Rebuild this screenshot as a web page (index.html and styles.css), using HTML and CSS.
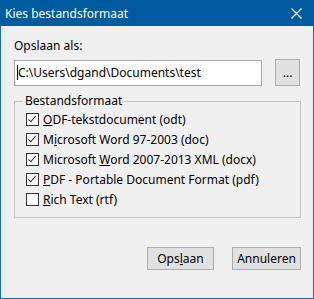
FILE: index.html
```html
<!DOCTYPE html>
<html lang="nl">
<head>
  <meta charset="UTF-8">
  <title>Kies bestandsformaat</title>
  <link rel="stylesheet" href="styles.css">
</head>
<body>

<div class="window">
  <div class="titlebar">
    <span class="title">Kies bestandsformaat</span>
    <svg class="close" width="11" height="11" viewBox="0 0 11 11">
      <path d="M0.5 0.5 L10.5 10.5 M10.5 0.5 L0.5 10.5" stroke="#fff" stroke-width="1.2"/>
    </svg>
  </div>

  <div class="content">
    <div class="label">Opslaan als:</div>
    <div class="path-row">
      <div class="path-input"><span class="caret"></span>C:\Users\dgand\Documents\test</div>
      <button class="btn browse">...</button>
    </div>

    <fieldset class="group">
      <legend>Bestandsformaat</legend>
      <div class="check-row"><span class="box checked"></span><span><u>O</u>DF-tekstdocument (odt)</span></div>
      <div class="check-row"><span class="box checked"></span><span>M<u>i</u>crosoft Word 97-2003 (doc)</span></div>
      <div class="check-row"><span class="box checked"></span><span>Microsoft <u>W</u>ord 2007-2013 XML (docx)</span></div>
      <div class="check-row"><span class="box checked"></span><span><u>P</u>DF - Portable Document Format (pdf)</span></div>
      <div class="check-row"><span class="box"></span><span><u>R</u>ich Text (rtf)</span></div>
    </fieldset>

    <div class="actions">
      <button class="btn action">Ops<u>l</u>aan</button>
      <button class="btn action">Annuleren</button>
    </div>
  </div>
</div>

</body>
</html>
```

FILE: styles.css
```css
body {
  margin: 0;
  font-family: 'Segoe UI', 'Noto Sans', 'Open Sans', sans-serif;
  font-size: 12px;
  color: #000;
}
.window {
  width: 314px;
  height: 299px;
  box-sizing: border-box;
  border: 1px solid #1a6bb5;
  border-top: none;
  background-color: #f0f0f0;
  display: flex;
  flex-direction: column;
}
.titlebar {
  height: 26px;
  margin: 0 -1px;
  background-color: #005a9e;
  color: #fff;
  display: flex;
  align-items: center;
  justify-content: space-between;
  padding: 0 12px 0 5px;
  flex-shrink: 0;
}
.title {
  line-height: 16px;
  margin-top: 1px;
}
.content {
  padding: 12px 13px 0 13px;
  display: flex;
  flex-direction: column;
}
.label {
  line-height: 16px;
  margin-left: 0;
}
.path-row {
  display: flex;
  align-items: center;
  margin-top: 5px;
}
.path-input {
  width: 249px;
  height: 26px;
  box-sizing: border-box;
  background-color: #fff;
  border: 1px solid #a8a8a8;
  padding-left: 2px;
  line-height: 24px;
  display: flex;
  align-items: center;
  white-space: nowrap;
}
.caret {
  width: 1px;
  height: 15px;
  background-color: #000;
  margin-right: 0;
}
.btn {
  font-family: inherit;
  font-size: 12px;
  color: #000;
  background-color: #e1e1e1;
  border: 1px solid #adadad;
  padding: 0;
  margin: 0;
}
.browse {
  width: 25px;
  height: 27px;
  margin-left: 13px;
  line-height: 20px;
}
.group {
  margin: 7px 0 0 0;
  padding: 0 0 8px 11px;
  width: 287px;
  box-sizing: border-box;
  border: 1px solid #c4c4c4;
}
.group legend {
  padding: 0 2px;
  margin-left: -3px;
  line-height: 16px;
}
.check-row {
  display: flex;
  align-items: center;
  height: 20px;
}
.box {
  width: 13px;
  height: 13px;
  box-sizing: border-box;
  border: 1px solid #333;
  background-color: #fff;
  margin-right: 4px;
  position: relative;
}
.box.checked::after {
  content: "";
  position: absolute;
  left: 3px;
  top: 0px;
  width: 3px;
  height: 7px;
  border: solid #333;
  border-width: 0 1px 1px 0;
  transform: rotate(40deg);
}
.actions {
  display: flex;
  justify-content: flex-end;
  gap: 18px;
  margin-top: 29px;
  margin-right: -1px;
}
.action {
  height: 23px;
  line-height: 20px;
}
.action:first-child {
  width: 67px;
}
.action:last-child {
  width: 69px;
}
```
